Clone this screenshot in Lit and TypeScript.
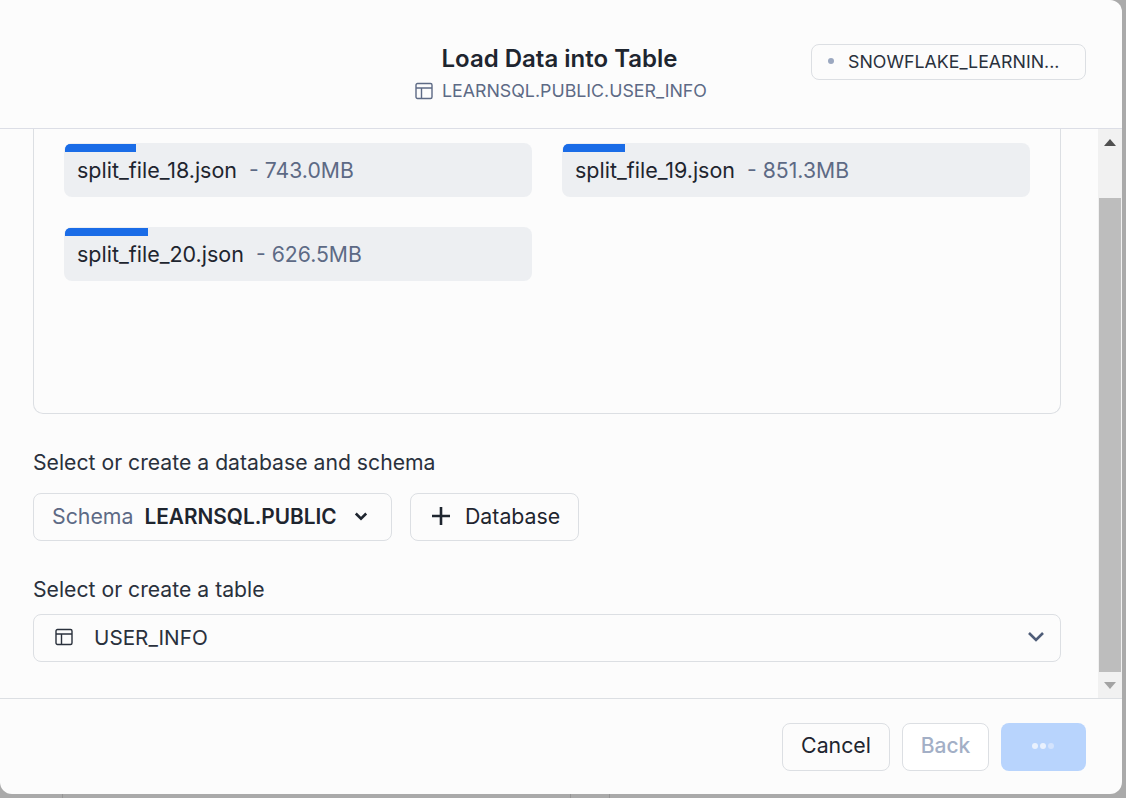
import { LitElement, html, css } from "lit";
import { customElement } from "lit/decorators.js";

const tableIcon = (size: number, color: string) => html`<svg width=${size} height=${size} viewBox="0 0 18 18" fill="none" stroke=${color} stroke-width="1.4">
  <rect x="1" y="1.5" width="16" height="15" rx="1.5"></rect>
  <path d="M1 6h16M6.5 6v10.5"></path>
</svg>`;

const files = [
  { name: "split_file_18.json", size: "743.0MB", bar: 71 },
  { name: "split_file_19.json", size: "851.3MB", bar: 62 },
  { name: "split_file_20.json", size: "626.5MB", bar: 83 },
];

@customElement("app-root")
export class AppRoot extends LitElement {
  static styles = css`
    :host {
      display: block;
      width: 1126px;
      height: 798px;
      background: #aaaaaa;
      font-family: Inter, "Liberation Sans", sans-serif;
      color: #1e252f;
      overflow: hidden;
    }
    .modal {
      width: 1122px;
      height: 794px;
      background: #fcfcfc;
      border-radius: 0 12px 12px 12px;
      display: flex;
      flex-direction: column;
      overflow: hidden;
    }
    .backdrop {
      height: 4px;
      display: flex;
    }
    .backdrop i {
      width: 1px;
      background: #969696;
    }
    .backdrop i:nth-child(1) {
      margin-left: 62px;
    }
    .backdrop i:nth-child(2) {
      margin-left: 507px;
    }
    .backdrop i:nth-child(3) {
      margin-left: 38px;
    }
    .header {
      height: 128px;
      flex: none;
      border-bottom: 1px solid #dcdee6;
      position: relative;
      display: flex;
      flex-direction: column;
      align-items: flex-start;
    }
    .title {
      margin-top: 44px;
      font-size: 24px;
      line-height: 30px;
      font-weight: 600;
      width: 1119px;
      text-align: center;
    }
    .sub {
      margin-top: 4px;
      display: flex;
      align-items: center;
      gap: 9px;
      font-size: 17.8px;
      line-height: 26px;
      color: #5d6a85;
      width: 1122px;
      justify-content: center;
    }
    .wh {
      position: absolute;
      left: 811px;
      top: 44px;
      width: 275px;
      height: 36px;
      box-sizing: border-box;
      border: 1px solid #dcdfe3;
      border-radius: 8px;
      display: flex;
      align-items: center;
      padding: 0 0 2px 16px;
      gap: 14px;
      font-size: 17.8px;
      color: #2a313c;
    }
    .dot {
      width: 6px;
      height: 6px;
      border-radius: 50%;
      background: #9ba8c0;
    }
    .middle {
      flex: 1;
      display: flex;
      min-height: 0;
    }
    .content {
      flex: 1;
      min-width: 0;
      padding: 0 37px 0 33px;
    }
    .dropbox {
      height: 285px;
      box-sizing: border-box;
      border: 1px solid #dcdfe3;
      border-top: 0;
      border-radius: 0 0 10px 10px;
      padding: 14px 30px 0 30px;
      display: grid;
      grid-template-columns: 468px 468px;
      column-gap: 30px;
      row-gap: 30px;
      align-content: start;
    }
    .file {
      height: 54px;
      background: #edeff2;
      border-radius: 8px;
      position: relative;
      overflow: hidden;
      display: flex;
      align-items: center;
      padding-left: 13px;
      font-size: 21.5px;
      color: #1e252f;
      white-space: pre;
    }
    .bar {
      position: absolute;
      left: 1px;
      top: 1px;
      height: 8px;
      background: #1a6ce7;
      border-radius: 5px 0 0 0;
    }
    .size {
      color: #5d6a85;
      margin-left: 12px;
      font-size: 21.2px;
    }
    .label {
      font-size: 21.2px;
      line-height: 26px;
      color: #2a313c;
    }
    .l1 {
      margin-top: 35px;
    }
    .row {
      display: flex;
      gap: 18px;
      margin-top: 18px;
    }
    .btn {
      height: 48px;
      box-sizing: border-box;
      border: 1px solid #dcdfe3;
      border-radius: 8px;
      display: flex;
      align-items: center;
      font-size: 21.3px;
      background: #fcfcfc;
      padding-bottom: 2px;
    }
    .schema {
      width: 359px;
      padding-left: 18px;
    }
    .schema .k {
      color: #5d6a85;
    }
    .schema .v {
      font-weight: 600;
      margin-left: 11px;
      font-size: 20.8px;
    }
    .schema svg {
      margin-left: 15px;
    }
    .db {
      width: 169px;
      padding-left: 20px;
      gap: 14px;
    }
    .l2 {
      margin-top: 35px;
    }
    .select {
      margin-top: 12px;
      height: 48px;
      box-sizing: border-box;
      border: 1px solid #dcdfe3;
      border-radius: 8px;
      display: flex;
      align-items: center;
      padding: 0 14px 2px 21px;
      font-size: 20.7px;
      color: #2a313c;
      gap: 21px;
    }
    .select .grow {
      flex: 1;
    }
    .scroll {
      width: 24px;
      flex: none;
      background: #f1f1f1;
      display: flex;
      flex-direction: column;
      align-items: center;
    }
    .arrow {
      height: 26px;
      flex: none;
      display: flex;
      align-items: center;
      justify-content: center;
    }
    .track {
      flex: 1;
      width: 100%;
      display: flex;
      flex-direction: column;
      padding: 43px 1px 0;
      box-sizing: border-box;
    }
    .thumb {
      flex: 1;
      background: #bdbdbd;
    }
    .footer {
      height: 96px;
      flex: none;
      box-sizing: border-box;
      border-top: 1px solid #dcdfe3;
      display: flex;
      justify-content: flex-end;
      align-items: flex-start;
      padding: 24px 36px 0 0;
      gap: 12px;
    }
    .fbtn {
      height: 48px;
      box-sizing: border-box;
      border-radius: 8px;
      border: 1px solid #dcdfe3;
      display: flex;
      align-items: center;
      justify-content: center;
      font-size: 21.3px;
      font-weight: 400;
      padding-bottom: 4px;
    }
    .cancel {
      width: 108px;
    }
    .back {
      width: 87px;
      color: #a3afc6;
      background: #fff;
      font-weight: 500;
      font-size: 21px;
    }
    .next {
      width: 85px;
      background: #b8d4fd;
      border: 0;
      gap: 2px;
      padding: 0 2px 2px 0;
    }
    .next i {
      width: 6px;
      height: 6px;
      border-radius: 50%;
      background: #e9f1fe;
    }
    .next i:last-child {
      background: #d3e3fd;
    }
  `;

  render() {
    return html`
      <div class="modal">
        <div class="header">
          <div class="title">Load Data into Table</div>
          <div class="sub">${tableIcon(18, "#5d6a85")}<span>LEARNSQL.PUBLIC.USER_INFO</span></div>
          <div class="wh"><span class="dot"></span><span>SNOWFLAKE_LEARNIN...</span></div>
        </div>
        <div class="middle">
          <div class="content">
            <div class="dropbox">
              ${files.map(
                (f) => html`<div class="file">
                  <div class="bar" style="width:${f.bar}px"></div>
                  <span>${f.name}</span><span class="size">- ${f.size}</span>
                </div>`
              )}
            </div>
            <div class="label l1">Select or create a database and schema</div>
            <div class="row">
              <div class="btn schema">
                <span class="k">Schema</span><span class="v">LEARNSQL.PUBLIC</span>
                <svg width="18" height="18" viewBox="0 0 18 18" fill="none" stroke="#1e252f" stroke-width="2.6"><path d="M3.800 6.500l5.200 5.200 5.200-5.200"></path></svg>
              </div>
              <div class="btn db">
                <svg width="20" height="20" viewBox="0 0 20 20" fill="none" stroke="#1e252f" stroke-width="2.6"><path d="M10 1v18M1 10h18"></path></svg>
                <span>Database</span>
              </div>
            </div>
            <div class="label l2">Select or create a table</div>
            <div class="select">
              ${tableIcon(18, "#2a313c")}
              <span class="grow">USER_INFO</span>
              <svg width="20" height="20" viewBox="0 0 20 20" fill="none" stroke="#4f5d78" stroke-width="2.6"><path d="M3 6l7 7 7-7"></path></svg>
            </div>
          </div>
          <div class="scroll">
            <div class="arrow"><svg width="12" height="7" viewBox="0 0 12 7"><path d="M6 0l6 7H0z" fill="#505050"></path></svg></div>
            <div class="track"><div class="thumb"></div></div>
            <div class="arrow"><svg width="12" height="7" viewBox="0 0 12 7"><path d="M0 0h12L6 7z" fill="#a3a3a3"></path></svg></div>
          </div>
        </div>
        <div class="footer">
          <div class="fbtn cancel">Cancel</div>
          <div class="fbtn back">Back</div>
          <div class="fbtn next"><i></i><i></i><i></i></div>
        </div>
      </div>
      <div class="backdrop"><i></i><i></i><i></i></div>
    `;
  }
}
